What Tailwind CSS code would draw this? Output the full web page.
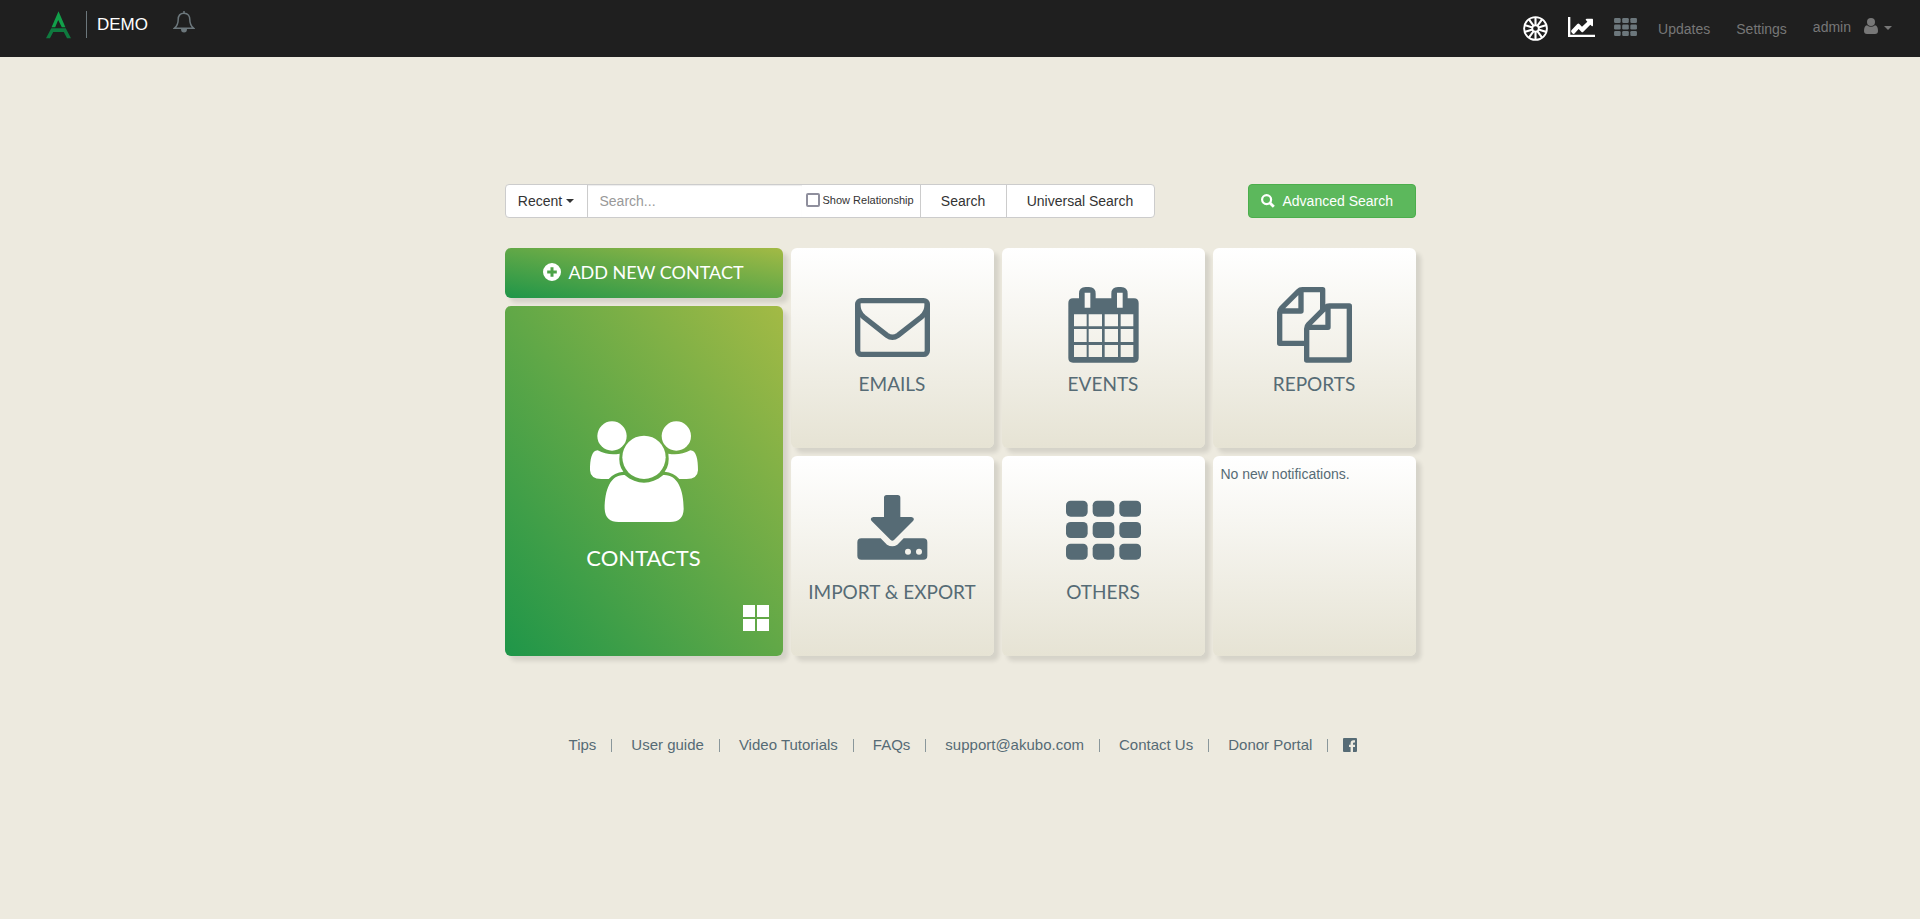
<!DOCTYPE html>
<html lang="en">
<head>
<meta charset="utf-8">
<title>Demo dashboard</title>
<script src="https://cdn.jsdelivr.net/npm/@tailwindcss/browser@4"></script>
</head>
<body class="flex min-h-screen flex-col bg-[#edeadf] font-['Liberation_Sans',Arial,sans-serif] text-[14px] text-[#333333]">

<header class="flex h-[57px] items-start justify-between bg-[#1f1f1f] pr-7 pl-[46px]">
  <div class="flex items-start pt-[11px]">
    <a href="#" aria-label="Home" class="mr-[15px]">
      <svg class="h-7 w-[25px]" viewBox="0 0 76 84"><path fill="#12a04a" d="M38 0 59 49H48L37 27 28 49H17Z"/><path fill="#0f7a3f" d="M16 52H60L76 82H64L54 63H22L12 82H0Z"/></svg>
    </a>
    <a href="#" class="flex h-[27px] items-center border-l border-[#6c777c] pl-[10px] text-[17px] leading-none text-white">DEMO</a>
    <button type="button" aria-label="Notifications" class="ml-[25px]">
      <svg class="h-[22px] w-[22px]" viewBox="0 0 22 22" fill="none" stroke="#6c777c" stroke-width="1.500"><path d="M11 2.200C6.800 2.200 5.200 5.300 5.200 8.600c0 4.400-1.400 6.700-3.700 8.600h19c-2.300-1.900-3.700-4.200-3.700-8.600 0-3.300-1.600-6.400-5.800-6.400Z"/><path d="M11 0v2.200"/><path fill="#6c777c" stroke="none" d="M8 18h6a3 3.500 0 0 1-6 0Z"/></svg>
    </button>
  </div>
  <nav class="flex h-[57px] items-center text-[#777777]" aria-label="Main">
    <a href="#" aria-label="Wheel">
      <svg class="size-[25px]" viewBox="0 0 25 25" fill="none" stroke="#ffffff"><circle cx="12.500" cy="12.500" r="11.400" stroke-width="1.900"/><circle cx="12.500" cy="12.500" r="3.200" stroke-width="1.700"/><g stroke-width="2.100"><path id="spoke" d="M12.500 1v8.300"/><use href="#spoke" transform="rotate(36 12.500 12.500)"/><use href="#spoke" transform="rotate(72 12.500 12.500)"/><use href="#spoke" transform="rotate(108 12.500 12.500)"/><use href="#spoke" transform="rotate(144 12.500 12.500)"/><use href="#spoke" transform="rotate(180 12.500 12.500)"/><use href="#spoke" transform="rotate(216 12.500 12.500)"/><use href="#spoke" transform="rotate(252 12.500 12.500)"/><use href="#spoke" transform="rotate(288 12.500 12.500)"/><use href="#spoke" transform="rotate(324 12.500 12.500)"/></g></svg>
    </a>
    <a href="#" aria-label="Charts" class="-mt-1 ml-5">
      <svg class="h-5 w-[27px]" viewBox="0 0 81 60"><path fill="#fff" d="M0 0H7V53H81V60H0Z"/><path fill="#fff" d="M53 8Q53 5 57 5H73Q75 5 75 8V25Q75 29 71 27L67 23 46 44Q43 47 40 44L32 36 19 50Q16 52 13 49L10 45Q8 42 11 39L28 21Q31 18 34 21L42 29 58 14Z"/></svg>
    </a>
    <a href="#" aria-label="Apps" class="-mt-1 ml-[19px]">
      <svg class="h-[18px] w-[23px]" viewBox="0 0 225 177" fill="#6c777c"><g id="row"><rect width="65" height="48" rx="12"/><rect x="80" width="65" height="48" rx="12"/><rect x="160" width="65" height="48" rx="12"/></g><use href="#row" y="64"/><use href="#row" y="129"/></svg>
    </a>
    <a href="#" class="mt-[2px] ml-[21px]">Updates</a>
    <a href="#" class="mt-[2px] ml-[26px]">Settings</a>
    <button type="button" class="-mt-[2px] ml-[26px] flex items-center">admin
      <svg class="-mt-1 ml-[13px] h-4 w-[14px]" viewBox="0 0 14 16" fill="#777777"><circle cx="7" cy="4" r="4"/><path d="M3 7.200Q0 7.700 0 13 0 16 3 16H11Q14 16 14 13 14 7.700 11 7.200 7 10.500 3 7.200Z"/></svg>
      <svg class="ml-[6px] h-1 w-2" viewBox="0 0 8 4" fill="#777777"><path d="M0 0H8L4 4Z"/></svg>
    </button>
  </nav>
</header>

<main class="mx-auto w-full max-w-[911px] pt-[127px]">
  <form class="flex h-[34px] items-stretch justify-between" onsubmit="return false">
    <div class="flex divide-x divide-[#cccccc] overflow-hidden rounded border border-[#cccccc] bg-white">
      <button type="button" class="flex w-[82px] items-center justify-center gap-1">Recent
        <svg class="h-1 w-2" viewBox="0 0 8 4" fill="#333333"><path d="M0 0H8L4 4Z"/></svg>
      </button>
      <div class="flex w-[333px] items-center">
        <input type="text" aria-label="Search" placeholder="Search..." class="h-full w-[214px] pl-3 shadow-[inset_0_1px_1px_rgba(0,0,0,0.075)] outline-none placeholder:text-[#999999]">
        <label class="-mt-[2px] flex flex-1 items-center pl-1 text-[11px] whitespace-nowrap"><input type="checkbox" class="mr-[3px] size-[14px] appearance-none rounded-[2px] border-2 border-[#8f8f9d] bg-white">Show Relationship</label>
      </div>
      <button type="submit" class="w-[86px]">Search</button>
      <button type="button" class="w-[147px]">Universal Search</button>
    </div>
    <button type="button" class="flex w-[168px] items-center rounded border border-[#4cae4c] bg-[#5cb85c] pl-3 text-white">
      <svg class="mr-2 size-[14px]" viewBox="0 0 14 14" fill="none" stroke="#ffffff"><circle cx="5.600" cy="5.600" r="4.500" stroke-width="2.200"/><path d="M9 9l3.800 3.800" stroke-width="2.800"/></svg>
      Advanced Search
    </button>
  </form>

  <div class="mt-[30px] grid grid-cols-[278px_1fr_1fr_1fr] grid-rows-[200px_200px] gap-2 font-[Lato,sans-serif] text-[19px] leading-6 text-[#566b75]">
    <div class="row-span-2 flex flex-col gap-2 text-white">
      <a href="#" class="flex h-[50px] items-center justify-center rounded-md bg-linear-to-tr/srgb from-[#1f9649] to-[#a3ba45] pb-[2px] text-[18px] shadow-[5px_5px_4px_rgba(0,0,0,0.1)]">
        <svg class="mr-[7px] size-[18px]" viewBox="0 0 18 18"><path fill="#fff" fill-rule="evenodd" d="M9 0a9 9 0 1 0 0 18A9 9 0 1 0 9 0ZM7.500 4.200h3v3.300h3.300v3h-3.300v3.300h-3v-3.300H4.200v-3h3.300Z"/></svg>
        ADD NEW CONTACT
      </a>
      <a href="#" class="relative flex flex-1 flex-col items-center rounded-md bg-linear-to-tr/srgb from-[#1f9649] to-[#a3ba45] pt-[115px] text-[22px] shadow-[5px_5px_4px_rgba(0,0,0,0.1)]">
        <svg class="h-[101px] w-[108px]" viewBox="0 0 324 303" fill="#ffffff"><circle cx="66" cy="45" r="44"/><circle cx="259" cy="45" r="44"/><circle cx="162" cy="109" r="65"/><path id="side" d="M23 88C5 88 0 115 0 148Q1 174 34 174H56Q73 154 100 152 84 132 89 98 55 105 23 88Z"/><use href="#side" transform="matrix(-1 0 0 1 324 0)"/><path d="M104 162C62 160 44 205 44 264Q46 303 86 303H240Q280 303 281 264C281 205 262 160 220 162 183 193 141 193 104 162Z"/></svg>
        <span class="mt-6">CONTACTS</span>
        <svg class="absolute right-[14px] bottom-[25px] size-[26px]" viewBox="0 0 26 26" fill="#ffffff"><path d="M0 0H12V12H0ZM14 0H26V12H14ZM0 14H12V26H0ZM14 14H26V26H14Z"/></svg>
      </a>
    </div>

    <a href="#" class="flex flex-col items-center rounded-md bg-linear-to-b/srgb from-white to-[#e6e3d4] pt-[39px] shadow-[5px_5px_4px_rgba(0,0,0,0.1)]">
      <svg class="h-[76px] w-[75px]" viewBox="0 0 225 228" fill="none" stroke="#566b75" stroke-width="16"><rect x="8" y="41" width="209" height="161" rx="11"/><path d="M8 50C8 70 14 80 26 90L96 145Q112 157 129 145L199 90C211 80 217 70 217 50"/></svg>
      <span class="mt-[9px]">EMAILS</span>
    </a>
    <a href="#" class="flex flex-col items-center rounded-md bg-linear-to-b/srgb from-white to-[#e6e3d4] pt-[39px] shadow-[5px_5px_4px_rgba(0,0,0,0.1)]">
      <svg class="h-[76px] w-[75px]" viewBox="-7 0 225 228" fill="#566b75"><path fill-rule="evenodd" d="M14 34H32V20Q32 0 52 0H62Q82 0 82 20V34H129V20Q129 0 149 0H158Q178 0 178 20V34H197Q211 34 211 48V213Q211 227 197 227H14Q0 227 0 213V48Q0 34 14 34ZM49 17V62H66V17ZM146 17V62H163V17ZM17 82V118H55V82ZM61 82V118H101V82ZM109 82V118H149V82ZM157 82V118H195V82ZM17 126V165H55V126ZM61 126V165H101V126ZM109 126V165H149V126ZM157 126V165H195V126ZM17 174V210H55V174ZM61 174V210H101V174ZM109 174V210H149V174ZM157 174V210H195V174Z"/></svg>
      <span class="mt-[9px]">EVENTS</span>
    </a>
    <a href="#" class="flex flex-col items-center rounded-md bg-linear-to-b/srgb from-white to-[#e6e3d4] pt-[39px] shadow-[5px_5px_4px_rgba(0,0,0,0.1)]">
      <svg class="h-[76px] w-[75px]" viewBox="0 0 225 228" fill="none" stroke="#566b75" stroke-width="16" stroke-linejoin="round"><path d="M88 169H8V76Q8 69 13 64L64 13Q69 8 76 8H137V72M72 10V72H10"/><path d="M157 57H217V219H89V125Q89 118 94 113L145 62Q150 57 157 57ZM153 59V121H91"/></svg>
      <span class="mt-[9px]">REPORTS</span>
    </a>
    <a href="#" class="flex flex-col items-center rounded-md bg-linear-to-b/srgb from-white to-[#e6e3d4] pt-[39px] shadow-[5px_5px_4px_rgba(0,0,0,0.1)]">
      <svg class="h-[76px] w-[75px]" viewBox="-7 0 225 228" fill="#566b75"><path d="M88 0H121Q129 0 129 8V66H162Q174 68 167 78L110 135Q105 140 100 135L43 78Q36 68 48 66H80V8Q80 0 88 0Z"/><path fill-rule="evenodd" d="M12 130H70L89 149Q105 159 120 149L139 130H198Q210 130 210 142V182Q210 194 198 194H12Q0 194 0 182V142Q0 130 12 130ZM152 161a9 9 0 1 0 0 18 9 9 0 1 0 0-18ZM185 161a9 9 0 1 0 0 18 9 9 0 1 0 0-18Z"/></svg>
      <span class="mt-[9px]">IMPORT &amp; EXPORT</span>
    </a>
    <a href="#" class="flex flex-col items-center rounded-md bg-linear-to-b/srgb from-white to-[#e6e3d4] pt-[39px] shadow-[5px_5px_4px_rgba(0,0,0,0.1)]">
      <svg class="h-[76px] w-[75px]" viewBox="0 -17 225 228" fill="#566b75"><g id="cells"><rect width="65" height="48" rx="14"/><rect x="80" width="65" height="48" rx="14"/><rect x="160" width="65" height="48" rx="14"/></g><use href="#cells" y="64"/><use href="#cells" y="129"/></svg>
      <span class="mt-[9px]">OTHERS</span>
    </a>
    <section aria-label="Notifications" class="rounded-md bg-linear-to-b/srgb from-white to-[#e6e3d4] p-2 shadow-[5px_5px_4px_rgba(0,0,0,0.1)]">
      <p class="font-['Liberation_Sans',Arial,sans-serif] text-[14px] leading-5">No new notifications.</p>
    </section>
  </div>
</main>

<footer class="mt-[79px] flex items-center justify-center pl-[6px] text-[15px] leading-5 text-[#566b75]">
  <a href="#">Tips</a><span class="mr-[19px] ml-[15px] h-[13px] w-px bg-[#8a979b]"></span>
  <a href="#">User guide</a><span class="mr-[19px] ml-[15px] h-[13px] w-px bg-[#8a979b]"></span>
  <a href="#">Video Tutorials</a><span class="mr-[19px] ml-[15px] h-[13px] w-px bg-[#8a979b]"></span>
  <a href="#">FAQs</a><span class="mr-[19px] ml-[15px] h-[13px] w-px bg-[#8a979b]"></span>
  <a href="#">support@akubo.com</a><span class="mr-[19px] ml-[15px] h-[13px] w-px bg-[#8a979b]"></span>
  <a href="#">Contact Us</a><span class="mr-[19px] ml-[15px] h-[13px] w-px bg-[#8a979b]"></span>
  <a href="#">Donor Portal</a><span class="mr-[15px] ml-[15px] h-[13px] w-px bg-[#8a979b]"></span>
  <a href="#" aria-label="Facebook"><svg class="size-[14px]" viewBox="0 0 14 14"><path fill="#566b75" fill-rule="evenodd" d="M1 0H13Q14 0 14 1V13Q14 14 13 14H10V9H12V6.800H10V5.500Q10 4.500 11 4.500H12V2.300H10.500Q7.600 2.300 7.600 5.200V6.800H6V9H7.600V14H1Q0 14 0 13V1Q0 0 1 0Z"/></svg></a>
</footer>

</body>
</html>
